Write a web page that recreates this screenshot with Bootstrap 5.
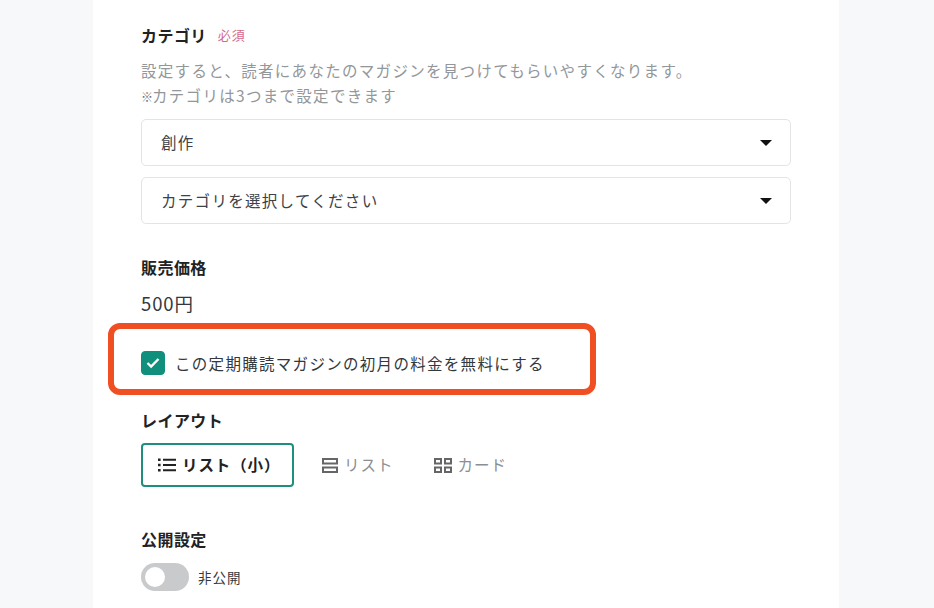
<!DOCTYPE html>
<html lang="ja">
<head>
<meta charset="utf-8">
<title>マガジン設定</title>
<link href="https://cdn.jsdelivr.net/npm/bootstrap@5.3.0/dist/css/bootstrap.min.css" rel="stylesheet">
<style>
html,body{height:608px;overflow:hidden}
body{background:#f6f8fa;font-family:"Noto Sans CJK JP","Liberation Sans",sans-serif;color:#08131a}
.sheet{width:746px;height:608px;margin-left:93px;background:#fff;padding:24px 48px 0;overflow:hidden}
.fld-title{font-size:16px;letter-spacing:.45px;font-weight:700;line-height:22px;color:#222;margin:0}
.req{font-size:13px;letter-spacing:1px;color:#d5688c;line-height:22px;margin-left:11px}
.hint{font-size:15.5px;letter-spacing:1.3px;line-height:25px;color:#92979b;margin:12px 0 10px;white-space:nowrap}
.hint span{font-size:12px;letter-spacing:-1px;color:#6f7479}
.sel.form-select{height:47px;border:1px solid #e2e4e6;border-radius:5px;padding:0 19px;font-size:15.5px;letter-spacing:1.3px;color:#3c4248;background-size:12px 6px;background-position:right 18px center;background-image:url("data:image/svg+xml,%3Csvg xmlns='http://www.w3.org/2000/svg' viewBox='0 0 12 6'%3E%3Cpath d='M0 0h12L6 6z' fill='%23111'/%3E%3C/svg%3E")}
.sel+.sel{margin-top:11px}
.price-sec{margin-top:32px}
.price{font-size:18.5px;letter-spacing:.9px;line-height:26px;color:#33383d;margin:12px 0 0}
.flag{width:488px;height:72px;margin:7px 0 0 -33px;border:6px solid #f04e23;border-radius:12px;padding:8px 0 0 27px}
.flag .form-check-input{width:24px;height:24px;margin:0 10px 0 0;border-radius:4px;background-color:#10907c;border-color:#10907c;background-size:24px;background-image:url("data:image/svg+xml,%3Csvg xmlns='http://www.w3.org/2000/svg' viewBox='0 0 24 24'%3E%3Cpath d='M6.5 12l3.6 3.6 7.4-7.6' fill='none' stroke='%23fff' stroke-width='2.4'/%3E%3C/svg%3E");flex:none}
.flag label{font-size:15.5px;letter-spacing:1.3px;color:#33383d;line-height:22px;white-space:nowrap}
.layout-sec{margin-top:14px}
.lay-row{margin-top:12px;height:44px}
.lay-btn{height:44px;border:2px solid #1f8f7d;border-radius:4px;background:#fff;color:#222;font-size:15.5px;letter-spacing:.9px;font-weight:700;padding:0 15px;width:153px;white-space:nowrap}
.lay-opt{font-size:15.5px;letter-spacing:1px;color:#8a8f94;background:none;border:0;padding:0;white-space:nowrap}
.lay-opt svg,.lay-btn svg{flex:none;margin-right:6px}
.opt1{margin-left:28px}
.opt2{margin-left:40px}
.pub-sec{margin-top:41px}
.pub-row{margin-top:13px;height:28px}
.sw.form-check-input{width:48px;height:28px;margin:0 9px 0 0;border:0;border-radius:14px;background-color:#c8cacc;background-position:left 3px center;background-size:22px;background-image:url("data:image/svg+xml,%3Csvg xmlns='http://www.w3.org/2000/svg' viewBox='0 0 22 22'%3E%3Ccircle cx='11' cy='11' r='10' fill='%23fff'/%3E%3C/svg%3E");float:none}
.pub-row label{font-size:13.5px;letter-spacing:1px;color:#33383d}
</style>
</head>
<body>
<div class="sheet">
  <div class="d-flex align-items-center">
    <h2 class="fld-title">カテゴリ</h2><span class="req">必須</span>
  </div>
  <p class="hint">設定すると、読者にあなたのマガジンを見つけてもらいやすくなります。<br><span>※</span>カテゴリは3つまで設定できます</p>
  <select class="form-select sel" aria-label="カテゴリ1"><option>創作</option></select>
  <select class="form-select sel" aria-label="カテゴリ2"><option>カテゴリを選択してください</option></select>

  <div class="price-sec">
    <h2 class="fld-title">販売価格</h2>
    <p class="price">500円</p>
  </div>

  <div class="flag d-flex align-items-center">
    <input class="form-check-input" type="checkbox" id="free" checked>
    <label for="free">この定期購読マガジンの初月の料金を無料にする</label>
  </div>

  <div class="layout-sec">
    <h2 class="fld-title">レイアウト</h2>
    <div class="lay-row d-flex align-items-center">
      <button type="button" class="lay-btn d-flex align-items-center">
        <svg width="18" height="14" viewBox="0 0 18 14"><path d="M0 0.5h2.6v2.4H0zM0 5.8h2.6v2.4H0zM0 11.1h2.6v2.4H0zM5 0.7h13v2H5zM5 6h13v2H5zM5 11.3h13v2H5z" fill="#222"/></svg>
        <span>リスト（小）</span>
      </button>
      <button type="button" class="lay-opt opt1 d-flex align-items-center">
        <svg width="16" height="15" viewBox="0 0 16 15"><path d="M1 1h14v4.5H1zM1 9.5h14V14H1z" fill="none" stroke="#666" stroke-width="2"/></svg>
        <span>リスト</span>
      </button>
      <button type="button" class="lay-opt opt2 d-flex align-items-center">
        <svg width="18" height="15" viewBox="0 0 18 15"><path d="M1 1h6v4.5H1zM11 1h6v4.5h-6zM1 9.5h6V14H1zM11 9.5h6V14h-6z" fill="none" stroke="#666" stroke-width="2"/></svg>
        <span>カード</span>
      </button>
    </div>
  </div>

  <div class="pub-sec">
    <h2 class="fld-title">公開設定</h2>
    <div class="pub-row d-flex align-items-center">
      <input class="form-check-input sw" type="checkbox" role="switch" id="pub">
      <label for="pub">非公開</label>
    </div>
  </div>
</div>
<script src="https://cdn.jsdelivr.net/npm/bootstrap@5.3.0/dist/js/bootstrap.bundle.min.js"></script>
</body>
</html>
